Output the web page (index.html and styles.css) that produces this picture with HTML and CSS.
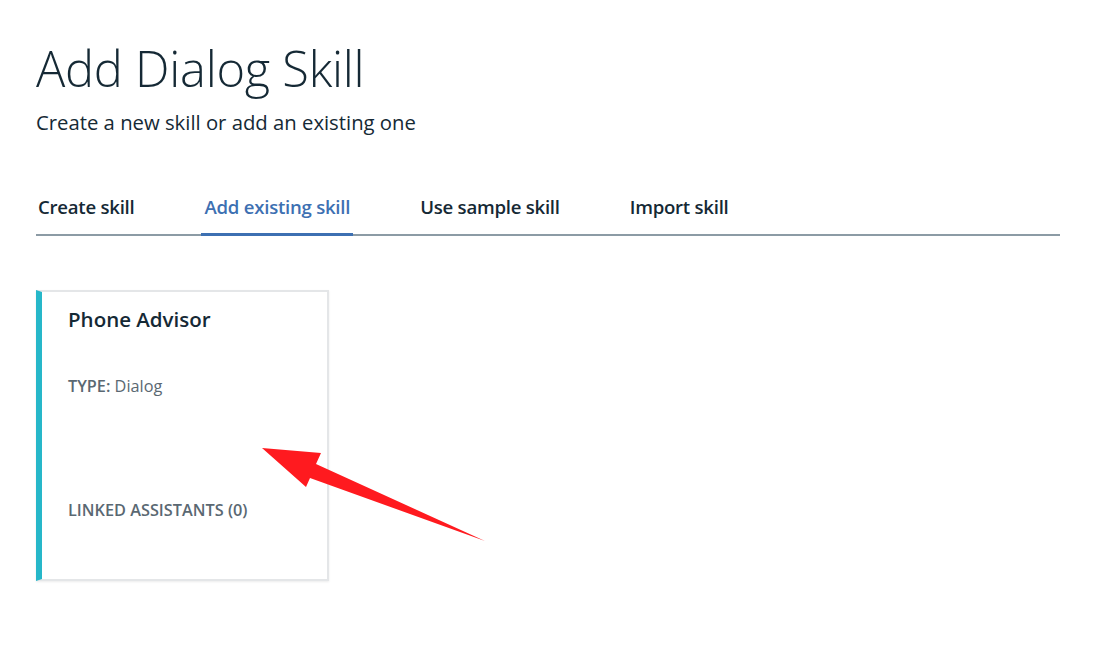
FILE: index.html
```html
<!DOCTYPE html>
<html>
<head>
<meta charset="utf-8">
<link rel="stylesheet" href="styles.css">
</head>
<body>
<div class="page">
  <h1 class="title">Add Dialog Skill</h1>
  <p class="subtitle">Create a new skill or add an existing one</p>
  <nav class="tabs">
    <div class="tab">Create skill</div>
    <div class="tab active">Add existing skill</div>
    <div class="tab">Use sample skill</div>
    <div class="tab">Import skill</div>
  </nav>
  <div class="cards">
    <div class="card">
      <div class="card-title">Phone Advisor</div>
      <div class="card-type"><span class="label">TYPE:</span> Dialog</div>
      <div class="card-linked">LINKED ASSISTANTS (0)</div>
    </div>
  </div>
  <svg class="arrow" width="1106" height="672" viewBox="0 0 1106 672">
    <polygon points="262,448 321,453 316,464 485,541 310,478 306,487" fill="#ff1a1f"/>
  </svg>
</div>
</body>
</html>
```
FILE: styles.css
```css
* { box-sizing: border-box; }
html, body { margin: 0; padding: 0; background: #fff; }
body { font-family: "Open Sans", "Noto Sans", sans-serif; color: #152935; }
.page { position: relative; padding: 38px 46px 0 36px; width: 1106px; height: 672px; }
.title { margin: 0; font-weight: 300; font-size: 48.8px; line-height: 60px; letter-spacing: -0.25px; color: #152935; }
.subtitle { margin: 12px 0 0 0; font-size: 20.3px; line-height: 24px; color: #152935; font-weight: 400; }
.tabs { display: flex; gap: 64px; margin-top: 51px; border-bottom: 2px solid #8c9ba5; height: 51px; }
.tab { font-size: 18.6px; font-weight: 600; line-height: 24px; color: #152935; padding: 10px 3px 0 3px; height: 49px; letter-spacing: -0.25px; }
.tab:first-child { margin-left: -1px; }
.tab.active { color: #3d70b2; border-bottom: 3px solid #3d70b2; height: 51px; }
.cards { margin-top: 54px; display: flex; }
.card { width: 293px; height: 291px; border: 2px solid #e4e6e8; border-left: 6px solid #26b7c9; padding: 14px 0 0 26px; box-shadow: 0 1px 2px rgba(0,0,0,0.08); }
.card-title { font-size: 20.5px; font-weight: 600; color: #152935; line-height: 26px; }
.card-type { margin-top: 44px; font-size: 16.3px; color: #5a6872; line-height: 20px; }
.label { font-weight: 600; }
.card-linked { margin-top: 104px; font-size: 16.3px; font-weight: 600; color: #5a6872; line-height: 20px; }
.arrow { position: absolute; left: 0; top: 0; pointer-events: none; }
```
